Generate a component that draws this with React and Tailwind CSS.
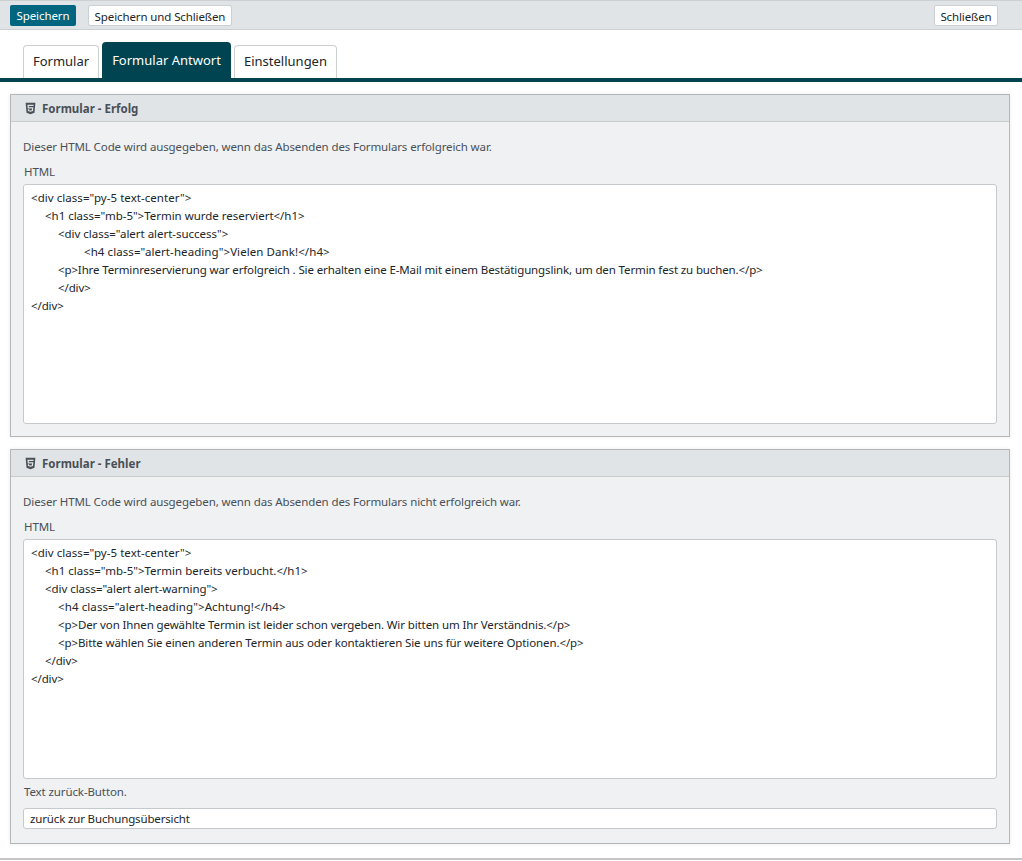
import React from "react";
import { FaHtml5 } from "react-icons/fa";

function CodeBox({ lines }) {
  return (
    <div className="mt-[3px] h-[240px] rounded-[3px] border border-[#c5c9cb] bg-white px-[7px] pt-[4px] text-[11.5px] leading-[18px] text-[#212529]">
      {lines.map(([indent, track, text], i) => (
        <div key={i} className={`whitespace-pre ${indent} ${track}`}>{text}</div>
      ))}
    </div>
  );
}

function Panel({ title, text, children, className }) {
  return (
    <section className={`border border-[#b3b7b9] bg-[#eff1f3] shadow-[0_0_4px_rgba(0,0,0,0.08)] ${className}`}>
      <h2 className="flex h-[27px] items-center gap-[5px] border-b border-[#c8cccd] bg-[#e1e4e6] pl-[13px] pt-[1px] text-[11.5px] font-bold text-[#495057]">
        <FaHtml5 className="h-[13px] w-[13px] text-[#495057]" />
        {title}
      </h2>
      <div className="px-[12px]">
        <p className="mt-[16px] text-[11.5px] leading-[18px] tracking-[-0.11px] text-[#495057]">{text}</p>
        <div className="mt-[7px] pl-[1px] text-[11.5px] leading-[18px] tracking-[-0.11px] text-[#495057]">HTML</div>
        {children}
      </div>
    </section>
  );
}

const ok = [
  ["", "tracking-[0.05px]", '<div class="py-5 text-center">'],
  ["ml-[14px]", "tracking-[-0.02px]", '<h1 class="mb-5">Termin wurde reserviert</h1>'],
  ["ml-[27px]", "tracking-[-0.02px]", '<div class="alert alert-success">'],
  ["ml-[53px]", "tracking-[0.08px]", '<h4 class="alert-heading">Vielen Dank!</h4>'],
  ["ml-[27px]", "tracking-[-0.125px]", "<p>Ihre Terminreservierung war erfolgreich . Sie erhalten eine E-Mail mit einem Bestätigungslink, um den Termin fest zu buchen.</p>"],
  ["ml-[27px]", "tracking-[-0.11px]", "</div>"],
  ["", "tracking-[-0.11px]", "</div>"],
];

const bad = [
  ["", "tracking-[0.05px]", '<div class="py-5 text-center">'],
  ["ml-[14px]", "tracking-[0px]", '<h1 class="mb-5">Termin bereits verbucht.</h1>'],
  ["ml-[14px]", "tracking-[-0.05px]", '<div class="alert alert-warning">'],
  ["ml-[27px]", "tracking-[0.1px]", '<h4 class="alert-heading">Achtung!</h4>'],
  ["ml-[27px]", "tracking-[-0.11px]", "<p>Der von Ihnen gewählte Termin ist leider schon vergeben. Wir bitten um Ihr Verständnis.</p>"],
  ["ml-[27px]", "tracking-[-0.1px]", "<p>Bitte wählen Sie einen anderen Termin aus oder kontaktieren Sie uns für weitere Optionen.</p>"],
  ["ml-[14px]", "tracking-[-0.11px]", "</div>"],
  ["", "tracking-[-0.11px]", "</div>"],
];

export default function App() {
  return (
    <div className="h-[861px] overflow-hidden bg-white font-['Noto_Sans','Open_Sans',sans-serif] text-[#212529]">
      <header className="flex h-[30px] items-center border-y border-[#cdd0d2] bg-[#e1e4e6] pl-[10px] pr-[24px]">
        <button className="h-[21px] w-[66px] rounded-[2px] bg-[#00667f] pt-[2px] text-[11.5px] tracking-[-0.11px] text-white">Speichern</button>
        <button className="ml-[12px] h-[21px] w-[144px] rounded-[2px] border border-[#cdd0d2] bg-white pt-[2px] text-[11.5px] tracking-[-0.11px]">Speichern und Schließen</button>
        <button className="ml-auto h-[21px] w-[64px] rounded-[2px] border border-[#cdd0d2] bg-white pt-[2px] text-[11.5px] tracking-[-0.11px]">Schließen</button>
      </header>

      <nav className="box-content flex h-[48px] items-end gap-[3px] border-b-4 border-[#004452] pl-[23px]">
        <div className="flex h-[33px] w-[76px] items-center justify-center rounded-t-[4px] border border-b-0 border-[#cdd0d2] text-[13px]">Formular</div>
        <div className="flex h-[36px] w-[129px] items-center justify-center rounded-t-[4px] bg-[#004452] pt-[1px] text-[13px] text-white">Formular Antwort</div>
        <div className="flex h-[33px] w-[103px] items-center justify-center rounded-t-[4px] border border-b-0 border-[#cdd0d2] text-[13px]">Einstellungen</div>
      </nav>

      <main className="pl-[10px] pr-[12px] pt-[12px]">
        <Panel
          title="Formular - Erfolg"
          text="Dieser HTML Code wird ausgegeben, wenn das Absenden des Formulars erfolgreich war."
          className="h-[343px]"
        >
          <CodeBox lines={ok} />
        </Panel>
        <Panel
          title="Formular - Fehler"
          text="Dieser HTML Code wird ausgegeben, wenn das Absenden des Formulars nicht erfolgreich war."
          className="mt-[12px] h-[395px]"
        >
          <CodeBox lines={bad} />
          <div className="mt-[4px] pl-[1px] text-[11.5px] leading-[18px] tracking-[-0.11px] text-[#495057]">Text zurück-Button.</div>
          <div className="mt-[7px] flex h-[21px] items-center rounded-[3px] border border-[#c5c9cb] bg-white px-[6px] text-[11.5px] tracking-[-0.15px]">zurück zur Buchungsübersicht</div>
        </Panel>
      </main>
      <div className="mt-[14px] h-[2px] bg-[#c4c6c8]" />
    </div>
  );
}
